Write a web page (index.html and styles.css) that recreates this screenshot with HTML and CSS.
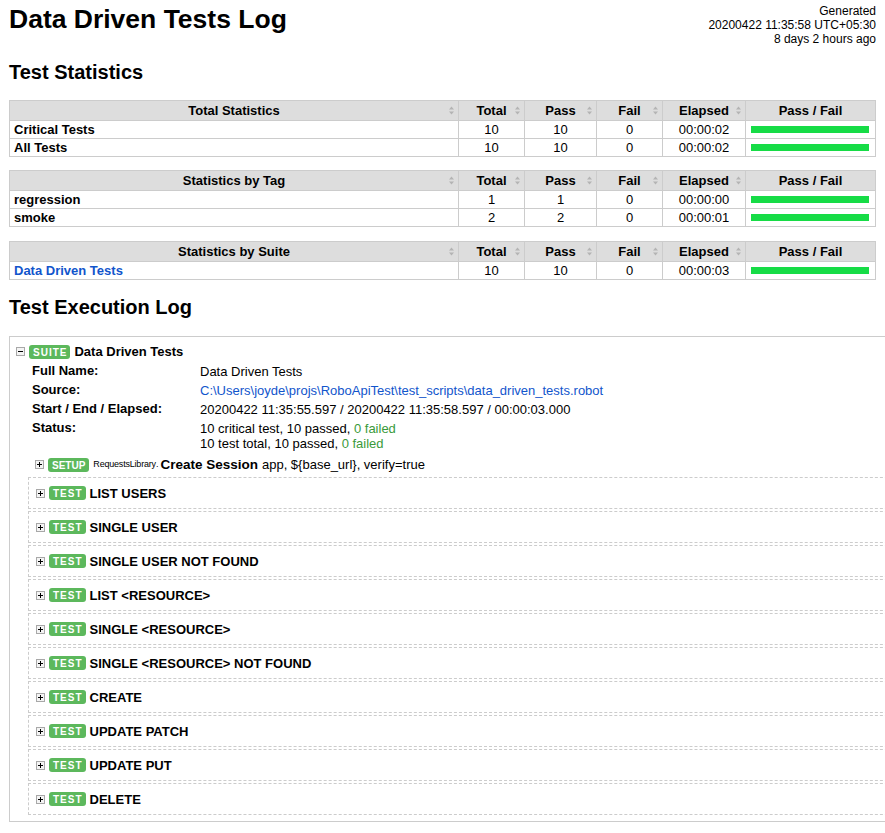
FILE: index.html
```html
<!DOCTYPE html>
<html lang="en">
<head>
<meta charset="utf-8">
<title>Data Driven Tests Log</title>
<link rel="stylesheet" href="styles.css">
</head>
<body>
<div class="top">
  <h1 class="title">Data Driven Tests Log</h1>
  <div class="generated">Generated<br>20200422 11:35:58 UTC+05:30<br>8 days 2 hours ago</div>
</div>

<h2 class="section-title">Test Statistics</h2>

<table class="stats">
  <colgroup><col class="c-name"><col class="c-total"><col class="c-pass"><col class="c-fail"><col class="c-el"><col class="c-graph"></colgroup>
  <thead><tr>
    <th>Total Statistics<svg class="sort" width="5" height="9" viewBox="0 0 5 9"><path d="M0 3.5L2.5 0.5L5 3.5Z M0 5.5L2.5 8.5L5 5.5Z" fill="#b4b4b4"/></svg></th>
    <th>Total<svg class="sort" width="5" height="9" viewBox="0 0 5 9"><path d="M0 3.5L2.5 0.5L5 3.5Z M0 5.5L2.5 8.5L5 5.5Z" fill="#b4b4b4"/></svg></th>
    <th>Pass<svg class="sort" width="5" height="9" viewBox="0 0 5 9"><path d="M0 3.5L2.5 0.5L5 3.5Z M0 5.5L2.5 8.5L5 5.5Z" fill="#b4b4b4"/></svg></th>
    <th>Fail<svg class="sort" width="5" height="9" viewBox="0 0 5 9"><path d="M0 3.5L2.5 0.5L5 3.5Z M0 5.5L2.5 8.5L5 5.5Z" fill="#b4b4b4"/></svg></th>
    <th>Elapsed<svg class="sort" width="5" height="9" viewBox="0 0 5 9"><path d="M0 3.5L2.5 0.5L5 3.5Z M0 5.5L2.5 8.5L5 5.5Z" fill="#b4b4b4"/></svg></th>
    <th>Pass / Fail</th>
  </tr></thead>
  <tbody>
    <tr><td class="stat-name">Critical Tests</td><td>10</td><td>10</td><td>0</td><td>00:00:02</td><td class="graph-cell"><div class="bar"></div></td></tr>
    <tr><td class="stat-name">All Tests</td><td>10</td><td>10</td><td>0</td><td>00:00:02</td><td class="graph-cell"><div class="bar"></div></td></tr>
  </tbody>
</table>

<table class="stats">
  <colgroup><col class="c-name"><col class="c-total"><col class="c-pass"><col class="c-fail"><col class="c-el"><col class="c-graph"></colgroup>
  <thead><tr>
    <th>Statistics by Tag<svg class="sort" width="5" height="9" viewBox="0 0 5 9"><path d="M0 3.5L2.5 0.5L5 3.5Z M0 5.5L2.5 8.5L5 5.5Z" fill="#b4b4b4"/></svg></th>
    <th>Total<svg class="sort" width="5" height="9" viewBox="0 0 5 9"><path d="M0 3.5L2.5 0.5L5 3.5Z M0 5.5L2.5 8.5L5 5.5Z" fill="#b4b4b4"/></svg></th>
    <th>Pass<svg class="sort" width="5" height="9" viewBox="0 0 5 9"><path d="M0 3.5L2.5 0.5L5 3.5Z M0 5.5L2.5 8.5L5 5.5Z" fill="#b4b4b4"/></svg></th>
    <th>Fail<svg class="sort" width="5" height="9" viewBox="0 0 5 9"><path d="M0 3.5L2.5 0.5L5 3.5Z M0 5.5L2.5 8.5L5 5.5Z" fill="#b4b4b4"/></svg></th>
    <th>Elapsed<svg class="sort" width="5" height="9" viewBox="0 0 5 9"><path d="M0 3.5L2.5 0.5L5 3.5Z M0 5.5L2.5 8.5L5 5.5Z" fill="#b4b4b4"/></svg></th>
    <th>Pass / Fail</th>
  </tr></thead>
  <tbody>
    <tr><td class="stat-name">regression</td><td>1</td><td>1</td><td>0</td><td>00:00:00</td><td class="graph-cell"><div class="bar"></div></td></tr>
    <tr><td class="stat-name">smoke</td><td>2</td><td>2</td><td>0</td><td>00:00:01</td><td class="graph-cell"><div class="bar"></div></td></tr>
  </tbody>
</table>

<table class="stats stats-suite">
  <colgroup><col class="c-name"><col class="c-total"><col class="c-pass"><col class="c-fail"><col class="c-el"><col class="c-graph"></colgroup>
  <thead><tr>
    <th>Statistics by Suite<svg class="sort" width="5" height="9" viewBox="0 0 5 9"><path d="M0 3.5L2.5 0.5L5 3.5Z M0 5.5L2.5 8.5L5 5.5Z" fill="#b4b4b4"/></svg></th>
    <th>Total<svg class="sort" width="5" height="9" viewBox="0 0 5 9"><path d="M0 3.5L2.5 0.5L5 3.5Z M0 5.5L2.5 8.5L5 5.5Z" fill="#b4b4b4"/></svg></th>
    <th>Pass<svg class="sort" width="5" height="9" viewBox="0 0 5 9"><path d="M0 3.5L2.5 0.5L5 3.5Z M0 5.5L2.5 8.5L5 5.5Z" fill="#b4b4b4"/></svg></th>
    <th>Fail<svg class="sort" width="5" height="9" viewBox="0 0 5 9"><path d="M0 3.5L2.5 0.5L5 3.5Z M0 5.5L2.5 8.5L5 5.5Z" fill="#b4b4b4"/></svg></th>
    <th>Elapsed<svg class="sort" width="5" height="9" viewBox="0 0 5 9"><path d="M0 3.5L2.5 0.5L5 3.5Z M0 5.5L2.5 8.5L5 5.5Z" fill="#b4b4b4"/></svg></th>
    <th>Pass / Fail</th>
  </tr></thead>
  <tbody>
    <tr><td class="stat-name"><a href="#s1">Data Driven Tests</a></td><td>10</td><td>10</td><td>0</td><td>00:00:03</td><td class="graph-cell"><div class="bar"></div></td></tr>
  </tbody>
</table>

<h2 class="section-title exec-title">Test Execution Log</h2>

<div class="suite" id="s1">
  <div class="suite-header">
    <svg class="toggle" width="9" height="9" viewBox="0 0 9 9"><rect x="0.5" y="0.5" width="8" height="8" fill="#f4f4f4" stroke="#a8a8a8"/><path d="M2 4.5h5" stroke="#000"/></svg>
    <span class="label">SUITE</span>
    <span class="name">Data Driven Tests</span>
  </div>
  <div class="children">
    <table class="meta">
      <tr><th>Full Name:</th><td>Data Driven Tests</td></tr>
      <tr><th>Source:</th><td><a href="#src">C:\Users\joyde\projs\RoboApiTest\test_scripts\data_driven_tests.robot</a></td></tr>
      <tr><th>Start / End / Elapsed:</th><td>20200422 11:35:55.597 / 20200422 11:35:58.597 / 00:00:03.000</td></tr>
      <tr><th>Status:</th><td>10 critical test, 10 passed, <span class="ok">0 failed</span><br>10 test total, 10 passed, <span class="ok">0 failed</span></td></tr>
    </table>
    <div class="setup">
      <svg class="toggle" width="9" height="9" viewBox="0 0 9 9"><rect x="0.5" y="0.5" width="8" height="8" fill="#f4f4f4" stroke="#a8a8a8"/><path d="M2 4.5h5M4.5 2v5" stroke="#000"/></svg>
      <span class="label label-setup">SETUP</span>
      <span class="parent">RequestsLibrary</span><span class="kw-dot">.</span><span class="kw">Create Session</span><span class="args">app, ${base_url}, verify=true</span>
    </div>
    <div class="test"><svg class="toggle" width="9" height="9" viewBox="0 0 9 9"><rect x="0.5" y="0.5" width="8" height="8" fill="#f4f4f4" stroke="#a8a8a8"/><path d="M2 4.5h5M4.5 2v5" stroke="#000"/></svg><span class="label">TEST</span><span class="test-name">LIST USERS</span></div>
    <div class="test"><svg class="toggle" width="9" height="9" viewBox="0 0 9 9"><rect x="0.5" y="0.5" width="8" height="8" fill="#f4f4f4" stroke="#a8a8a8"/><path d="M2 4.5h5M4.5 2v5" stroke="#000"/></svg><span class="label">TEST</span><span class="test-name">SINGLE USER</span></div>
    <div class="test"><svg class="toggle" width="9" height="9" viewBox="0 0 9 9"><rect x="0.5" y="0.5" width="8" height="8" fill="#f4f4f4" stroke="#a8a8a8"/><path d="M2 4.5h5M4.5 2v5" stroke="#000"/></svg><span class="label">TEST</span><span class="test-name">SINGLE USER NOT FOUND</span></div>
    <div class="test"><svg class="toggle" width="9" height="9" viewBox="0 0 9 9"><rect x="0.5" y="0.5" width="8" height="8" fill="#f4f4f4" stroke="#a8a8a8"/><path d="M2 4.5h5M4.5 2v5" stroke="#000"/></svg><span class="label">TEST</span><span class="test-name">LIST &lt;RESOURCE&gt;</span></div>
    <div class="test"><svg class="toggle" width="9" height="9" viewBox="0 0 9 9"><rect x="0.5" y="0.5" width="8" height="8" fill="#f4f4f4" stroke="#a8a8a8"/><path d="M2 4.5h5M4.5 2v5" stroke="#000"/></svg><span class="label">TEST</span><span class="test-name">SINGLE &lt;RESOURCE&gt;</span></div>
    <div class="test"><svg class="toggle" width="9" height="9" viewBox="0 0 9 9"><rect x="0.5" y="0.5" width="8" height="8" fill="#f4f4f4" stroke="#a8a8a8"/><path d="M2 4.5h5M4.5 2v5" stroke="#000"/></svg><span class="label">TEST</span><span class="test-name">SINGLE &lt;RESOURCE&gt; NOT FOUND</span></div>
    <div class="test"><svg class="toggle" width="9" height="9" viewBox="0 0 9 9"><rect x="0.5" y="0.5" width="8" height="8" fill="#f4f4f4" stroke="#a8a8a8"/><path d="M2 4.5h5M4.5 2v5" stroke="#000"/></svg><span class="label">TEST</span><span class="test-name">CREATE</span></div>
    <div class="test"><svg class="toggle" width="9" height="9" viewBox="0 0 9 9"><rect x="0.5" y="0.5" width="8" height="8" fill="#f4f4f4" stroke="#a8a8a8"/><path d="M2 4.5h5M4.5 2v5" stroke="#000"/></svg><span class="label">TEST</span><span class="test-name">UPDATE PATCH</span></div>
    <div class="test"><svg class="toggle" width="9" height="9" viewBox="0 0 9 9"><rect x="0.5" y="0.5" width="8" height="8" fill="#f4f4f4" stroke="#a8a8a8"/><path d="M2 4.5h5M4.5 2v5" stroke="#000"/></svg><span class="label">TEST</span><span class="test-name">UPDATE PUT</span></div>
    <div class="test"><svg class="toggle" width="9" height="9" viewBox="0 0 9 9"><rect x="0.5" y="0.5" width="8" height="8" fill="#f4f4f4" stroke="#a8a8a8"/><path d="M2 4.5h5M4.5 2v5" stroke="#000"/></svg><span class="label">TEST</span><span class="test-name">DELETE</span></div>
  </div>
</div>
</body>
</html>
```

FILE: styles.css
```css
* { box-sizing: border-box; }
body {
  margin: 0;
  padding: 0 9px;
  font-family: "Liberation Sans", Arial, Helvetica, sans-serif;
  font-size: 13px;
  color: #000;
  background: #fff;
  overflow-x: hidden;
}
a { color: #15c; text-decoration: none; }

.top {
  display: flex;
  justify-content: space-between;
  align-items: flex-start;
}
.title {
  margin: 0;
  padding-top: 4px;
  font-size: 26.5px;
  line-height: 30px;
  font-weight: bold;
}
.generated {
  margin-top: 4px;
  text-align: right;
  font-size: 12px;
  line-height: 14px;
}
.section-title {
  margin: 14px 0 16px;
  font-size: 20px;
  line-height: 24px;
  font-weight: bold;
}
.exec-title { margin: 15px 0 17px; }

.stats {
  width: 866px;
  table-layout: fixed;
  border-collapse: collapse;
  margin-bottom: 13px;
}
.stats-suite { margin-top: 14px; }
.c-name { width: 449px; }
.c-total { width: 66px; }
.c-pass { width: 72px; }
.c-fail { width: 66px; }
.c-el { width: 83px; }
.c-graph { width: 130px; }
.stats th, .stats td { border: 1px solid #ccc; }
.stats th {
  position: relative;
  background: #ddd;
  padding: 2px 4px;
  line-height: 15px;
  font-weight: bold;
  text-align: center;
}
.stats td {
  padding: 1px 4px;
  line-height: 15px;
  text-align: center;
}
.stats td.stat-name { text-align: left; font-weight: bold; }
.sort {
  position: absolute;
  right: 4px;
  top: 50%;
  margin-top: -4.5px;
  display: block;
}
.stats td.graph-cell { padding: 1px 6px 1px 5px; }
.bar {
  height: 7px;
  background: #16dc46;
}

.suite {
  width: 920px;
  border: 1px solid #ccc;
  padding: 0 0 4px 6px;
}
.suite-header {
  display: flex;
  align-items: center;
  height: 24px;
  padding-top: 5px;
}
.toggle { display: block; flex: none; margin-right: 4px; }
.label {
  display: inline-block;
  flex: none;
  height: 14px;
  line-height: 13px;
  padding: 1px 3px 0 4px;
  border-radius: 3px;
  background: #5cb85c;
  color: #fff;
  font-size: 10px;
  font-weight: bold;
  letter-spacing: 1px;
  margin-right: 4px;
}
.label-setup { letter-spacing: 0; padding: 1px 4px 0; }
.name { font-weight: bold; line-height: 19px; }
.children { margin-left: 12px; }

.meta {
  border-collapse: collapse;
  margin-left: 4px;
}
.meta th {
  width: 168px;
  text-align: left;
  vertical-align: top;
  font-weight: bold;
  padding: 2px 0;
  line-height: 15px;
}
.meta td {
  vertical-align: top;
  padding: 3px 0 1px;
  line-height: 15px;
}
.ok { color: #3a9a3a; }

.setup {
  display: flex;
  align-items: center;
  height: 25px;
  padding: 5px 0 5px 7px;
  line-height: 15px;
  white-space: nowrap;
}
.parent { font-size: 9px; letter-spacing: -0.2px; }
.kw-dot { font-size: 9px; margin-right: 2px; }
.kw { font-weight: bold; font-size: 13.5px; margin-right: 4px; }

.test {
  display: flex;
  align-items: center;
  height: 32px;
  border: 1px dashed #ccc;
  margin-bottom: 2px;
  padding-left: 7px;
}
.test-name { font-weight: bold; }
```
